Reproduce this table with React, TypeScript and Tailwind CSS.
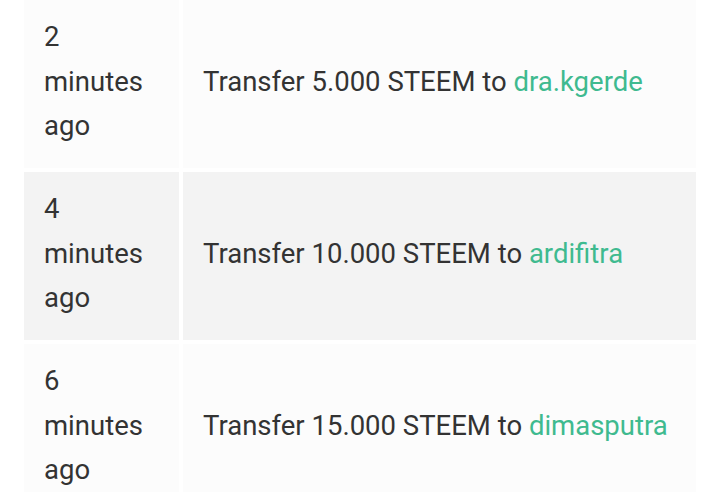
const transfers = [
  { ago: 2, amount: '5.000', to: 'dra.kgerde', bg: 'bg-[#fcfcfc]' },
  { ago: 4, amount: '10.000', to: 'ardifitra', bg: 'bg-[#f3f3f3]' },
  { ago: 6, amount: '15.000', to: 'dimasputra', bg: 'bg-[#fcfcfc]' },
]

export default function App() {
  return (
    <div className="h-[492px] w-[720px] overflow-hidden bg-white px-6 font-['Roboto',sans-serif] text-[27.5px] text-[#333333]">
      <div className="grid grid-cols-[155px_513px] gap-1">
        {transfers.map((t) => (
          <TransferRow key={t.to} {...t} />
        ))}
      </div>
    </div>
  )
}

function TransferRow({ ago, amount, to, bg }: { ago: number; amount: string; to: string; bg: string }) {
  return (
    <>
      <div className={`${bg} h-[168px] px-5 pt-[15px] leading-[44.5px]`}>
        <div>{ago}</div>
        <div>minutes</div>
        <div>ago</div>
      </div>
      <div className={`${bg} h-[168px] px-5 pt-[59.5px] leading-[44.5px]`}>
        Transfer {amount} STEEM to <a className="text-[#3fba8f]">{to}</a>
      </div>
    </>
  )
}
